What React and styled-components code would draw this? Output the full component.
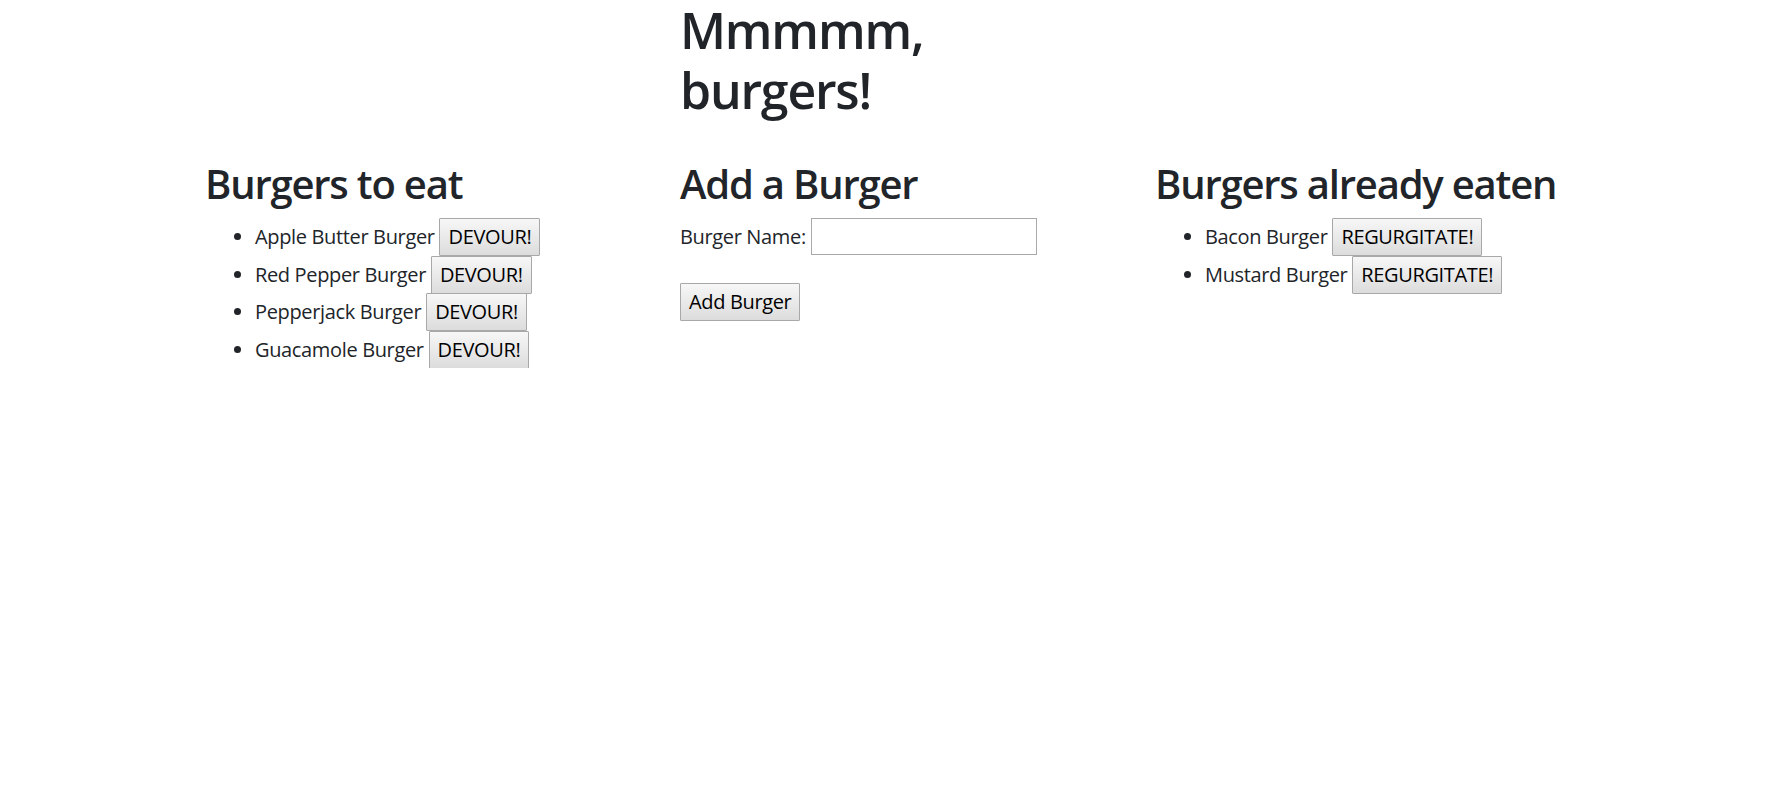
import React from 'react';
import styled, { createGlobalStyle } from 'styled-components';

const GlobalStyle = createGlobalStyle`
  body {
    margin: 0;
    background: #fff;
    color: #212529;
    font-family: "Open Sans", "Noto Sans", sans-serif;
    font-size: 20px;
    line-height: 1.5;
    letter-spacing: -0.35px;
  }
`;

const toEat = ['Apple Butter Burger', 'Red Pepper Burger', 'Pepperjack Burger', 'Guacamole Burger'];
const eaten = ['Bacon Burger', 'Mustard Burger'];

// burger list with one action button per item
const BurgerList = ({ burgers, action }) => (
  <List>
    {burgers.map((name) => (
      <Item key={name}>
        {name} <Button>{action}</Button>
      </Item>
    ))}
  </List>
);

const App = () => {
  return (
    <>
      <GlobalStyle />
      <Container>
        <Row>
          <Col $start={2}>
            <Title>Mmmmm, burgers!</Title>
          </Col>
        </Row>
        <Row $top={30}>
          <Col>
            <Heading>Burgers to eat</Heading>
            <BurgerList burgers={toEat} action="DEVOUR!" />
          </Col>
          <Col>
            <Heading>Add a Burger</Heading>
            <form onSubmit={(e) => e.preventDefault()}>
              <FormLine>
                <label htmlFor="burger">Burger Name:</label> <Input id="burger" type="text" />
              </FormLine>
              <Button type="submit">Add Burger</Button>
            </form>
          </Col>
          <Col>
            <Heading>Burgers already eaten</Heading>
            <BurgerList burgers={eaten} action="REGURGITATE!" />
          </Col>
        </Row>
      </Container>
    </>
  );
};

const Container = styled.div`
  width: 1425px;
  margin-left: 186px;
`;

const Row = styled.div`
  display: grid;
  grid-template-columns: repeat(3, 475px);
  margin-top: ${(p) => p.$top || 0}px;
`;

const Col = styled.div`
  grid-column: ${(p) => p.$start || 'auto'};
  padding: 0 19px;
  min-width: 0;
`;

const Title = styled.h1`
  margin: 0 0 10px;
  font-size: 50px;
  font-weight: 600;
  line-height: 1.2;
  letter-spacing: -1.2px;
`;

const Heading = styled.h2`
  margin: 0 0 10px;
  font-size: 40px;
  font-weight: 600;
  line-height: 1.2;
  letter-spacing: -1.2px;
`;

const List = styled.ul`
  margin: 0;
  padding-left: 50px;
`;

const Item = styled.li`
  line-height: 37px;
  height: 37.5px;
`;

const Button = styled.button`
  box-sizing: border-box;
  height: 38px;
  padding: 0 8px;
  font-family: inherit;
  font-size: 20px;
  letter-spacing: -0.35px;
  line-height: 36px;
  color: #000;
  background: linear-gradient(#f7f7f7, #dcdcdc);
  border: 1px solid #a8a8a8;
  border-radius: 1px;
  vertical-align: baseline;
`;

const FormLine = styled.div`
  height: 38px;
  margin-bottom: 27px;
  line-height: 37px;
`;

const Input = styled.input`
  box-sizing: border-box;
  width: 226px;
  height: 37px;
  border: 1px solid #a9a9a9;
  font: inherit;
  vertical-align: baseline;
`;

export default App;
